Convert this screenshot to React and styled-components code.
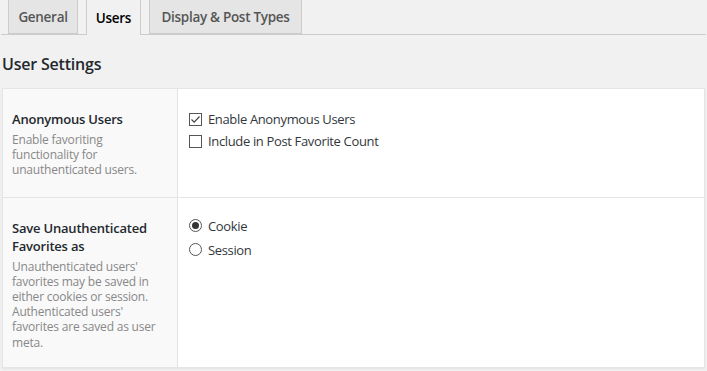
import React from 'react'
import styled, { createGlobalStyle } from 'styled-components'

const GlobalStyle = createGlobalStyle`
  html, body {
    margin: 0;
    padding: 0;
    background: #f1f1f1;
  }
  body {
    font-family: 'Open Sans', 'Noto Sans', sans-serif;
    color: #32373c;
    -webkit-font-smoothing: antialiased;
  }
`

const Page = styled.div`
  width: 707px;
  height: 371px;
  overflow: hidden;
  padding: 0 1px;
  box-sizing: border-box;
`

const TabBar = styled.nav`
  display: flex;
  gap: 8px;
  padding-left: 7px;
  height: 35px;
  margin-top: -1px;
  border-bottom: 1px solid #ccc;
`

const Tab = styled.div`
  box-sizing: border-box;
  height: ${p => (p.$active ? '36px' : '35px')};
  padding: 0 10px;
  display: flex;
  align-items: center;
  justify-content: center;
  border: 1px solid #ccc;
  border-bottom: ${p => (p.$active ? 'none' : '1px solid #ccc')};
  background: ${p => (p.$active ? '#f1f1f1' : '#e5e5e5')};
  color: ${p => (p.$active ? '#000' : '#555')};
  font-size: 13.5px;
  font-weight: 600;
  letter-spacing: -0.3px;
  position: relative;
  z-index: 1;
`

const Heading = styled.h2`
  margin: 17px 0 0 1px;
  height: 36px;
  font-size: 16px;
  font-weight: 600;
  color: #23282d;
  line-height: 24px;
  letter-spacing: -0.2px;
`

const Card = styled.div`
  margin: 0 1px;
  background: #fff;
  border: 1px solid #e5e5e5;
  box-shadow: 0 1px 2px rgba(0, 0, 0, 0.06);
`

const Row = styled.div`
  display: grid;
  grid-template-columns: 175px 1fr;
  border-top: ${p => (p.$first ? 'none' : '1px solid #e5e5e5')};
`

const LabelCell = styled.div`
  background: #f9f9f9;
  border-right: 1px solid #e5e5e5;
  padding: 21px 12px ${p => p.$bottom || 19}px 9px;
`

const Title = styled.div`
  font-size: 13px;
  font-weight: 600;
  line-height: 18px;
  color: #23282d;
  letter-spacing: -0.2px;
`

const Description = styled.p`
  margin: 4px 0 0;
  font-size: 12px;
  line-height: 15.2px;
  color: #888;
  letter-spacing: -0.2px;
`

const ValueCell = styled.div`
  padding: ${p => p.$top}px 12px 0 11px;
`

const Option = styled.label`
  display: flex;
  align-items: center;
  gap: 6px;
  height: ${p => p.$h}px;
  font-size: 13px;
  color: #32373c;
  letter-spacing: -0.35px;
`

const Box = styled.span`
  box-sizing: border-box;
  width: 13px;
  height: 13px;
  flex: none;
  border: 1px solid #555;
  background: #fff;
  display: flex;
  align-items: center;
  justify-content: center;
`

const Radio = styled(Box)`
  border-radius: 50%;

  &::after {
    content: '';
    display: ${p => (p.$on ? 'block' : 'none')};
    width: 7px;
    height: 7px;
    border-radius: 50%;
    background: #333;
  }
`

const Checkbox = ({ on }) => (
  <Box>
    {on && (
      <svg width="11" height="11" viewBox="0 0 11 11">
        <path d="M1.5 5.5 L4.2 8.2 L9.5 2.5" fill="none" stroke="#444" strokeWidth="1.2" />
      </svg>
    )}
  </Box>
)

const App = () => (
  <Page>
    <GlobalStyle />
    <TabBar>
      <Tab style={{ width: 70 }}>General</Tab>
      <Tab $active style={{ width: 55 }}>Users</Tab>
      <Tab style={{ width: 153 }}>Display &amp; Post Types</Tab>
    </TabBar>
    <Heading>User Settings</Heading>
    <Card>
      <Row $first>
        <LabelCell>
          <Title>Anonymous Users</Title>
          <Description>Enable favoriting functionality for unauthenticated users.</Description>
        </LabelCell>
        <ValueCell $top={19}>
          <Option $h={22}><Checkbox on />Enable Anonymous Users</Option>
          <Option $h={22}><Checkbox />Include in Post Favorite Count</Option>
        </ValueCell>
      </Row>
      <Row>
        <LabelCell $bottom={17}>
          <Title>Save Unauthenticated Favorites as</Title>
          <Description>
            Unauthenticated users' favorites may be saved in either cookies or session.
            Authenticated users' favorites are saved as user meta.
          </Description>
        </LabelCell>
        <ValueCell $top={16}>
          <Option $h={24}><Radio $on />Cookie</Option>
          <Option $h={24}><Radio />Session</Option>
        </ValueCell>
      </Row>
    </Card>
  </Page>
)

export default App
